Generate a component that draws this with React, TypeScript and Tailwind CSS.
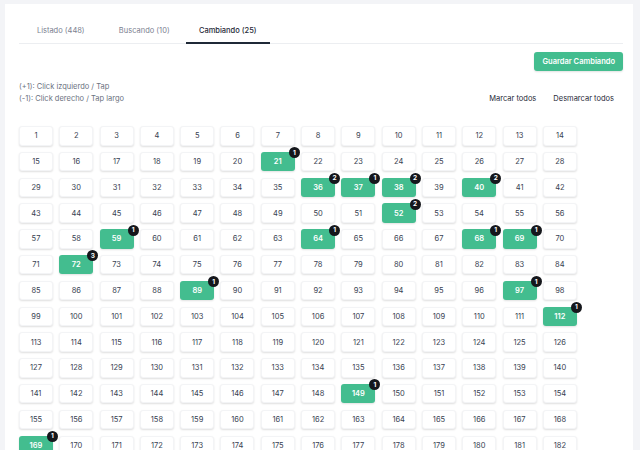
const selected: Record<number, number> = {
  21: 1, 36: 2, 37: 1, 38: 2, 40: 2, 52: 2, 59: 1, 64: 1, 68: 1, 69: 1,
  72: 3, 89: 1, 97: 1, 112: 1, 149: 1, 169: 1, 190: 1, 233: 2, 301: 1,
};

const tabs = [
  { label: "Listado (448)", active: false },
  { label: "Buscando (10)", active: false },
  { label: "Cambiando (25)", active: true },
];

function Cell({ n }: { n: number }) {
  const count = selected[n];
  if (count) {
    return (
      <div className="relative h-[19.5px] rounded-[3px] bg-[#43bd8f] shadow-[0_1px_2px_rgba(0,0,0,0.12)] flex items-center justify-center text-[7.5px] font-semibold text-white">
        {n}
        <span className="absolute -top-[4.5px] -right-[5px] w-[11px] h-[11px] rounded-full bg-[#15171c] flex items-center justify-center text-[6.5px] font-bold text-white leading-none">
          {count}
        </span>
      </div>
    );
  }
  return (
    <div className="h-[19.5px] rounded-[3px] bg-white border border-[#f3f4f6] shadow-[0_1px_2px_rgba(0,0,0,0.13)] flex items-center justify-center text-[7.5px] text-[#374151]">
      {n}
    </div>
  );
}

export default function App() {
  const numbers = Array.from({ length: 448 }, (_, i) => i + 1);

  return (
    <div className="min-h-screen bg-[#f3f4f7] pt-[4px] pl-[5px] pr-[7px] font-['Inter',sans-serif]">
      <div className="bg-white pt-[15px] pl-[14px] pr-[10px] pb-6">
        <div className="flex border-b border-[#eceef1]">
          {tabs.map((t) => (
            <div
              key={t.label}
              className={
                t.active
                  ? "w-[83.5px] text-center pt-[5px] pb-[3px] text-[7.5px] leading-[14px] font-medium text-[#1f2937] border-b-2 border-[#1f2937] -mb-px"
                  : "w-[83.5px] text-center pt-[5px] pb-[5px] text-[7.5px] leading-[14px] text-[#7b8190]"
              }
            >
              {t.label}
            </div>
          ))}
        </div>

        <div className="flex justify-end mt-[8px]">
          <button className="h-[19px] px-[8px] rounded-[3px] bg-[#43bd8f] text-white text-[7.5px] font-semibold shadow-[0_1px_2px_rgba(0,0,0,0.12)]">
            Guardar Cambiando
          </button>
        </div>

        <div className="flex items-end justify-between mt-[10px]">
          <div className="text-[7.5px] leading-[12px] text-[#6b7280]">
            <div>(+1): Click izquierdo / Tap</div>
            <div>(-1): Click derecho / Tap largo</div>
          </div>
          <div className="flex gap-[17px] mr-[9px] text-[7.5px] leading-[12px] text-[#1f2937]">
            <span>Marcar todos</span>
            <span>Desmarcar todos</span>
          </div>
        </div>

        <div className="grid grid-cols-[repeat(14,34px)] gap-x-[6.3px] gap-y-[6.3px] mt-[21px]">
          {numbers.map((n) => (
            <Cell key={n} n={n} />
          ))}
        </div>
      </div>
    </div>
  );
}
